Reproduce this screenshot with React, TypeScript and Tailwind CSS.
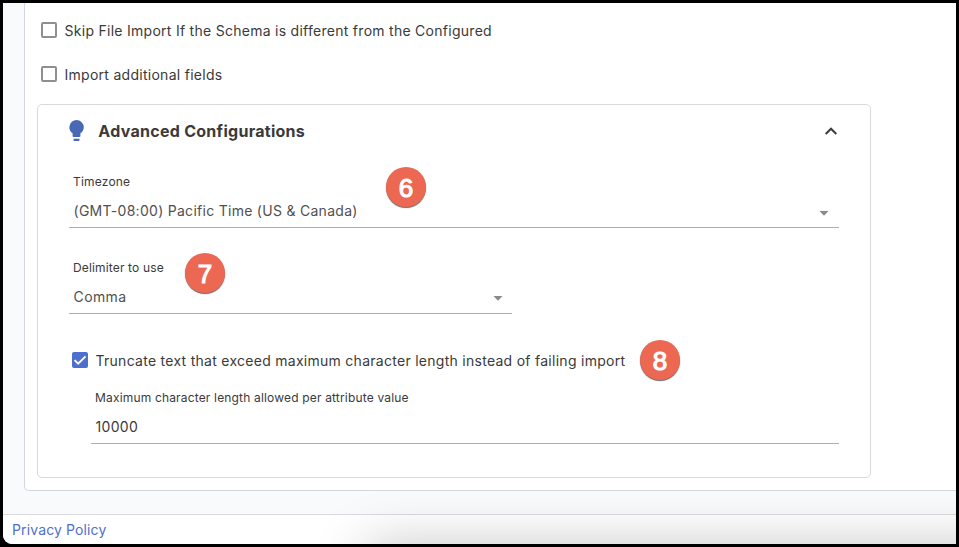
import type { ReactNode } from "react";

function Checkbox({ checked = false }: { checked?: boolean }) {
  if (checked) {
    return (
      <span className="flex size-4 shrink-0 items-center justify-center rounded-[2px] bg-[#4f6fcf]">
        <svg viewBox="0 0 16 16" className="size-4" fill="none">
          <path d="M2.6 8.2 6.2 11.7 13.5 4.4" stroke="#fff" strokeWidth="1.8" />
        </svg>
      </span>
    );
  }
  return <span className="size-4 shrink-0 rounded-[2px] border-2 border-[#8f8f8f] bg-white" />;
}

function Badge({ children, className }: { children: ReactNode; className: string }) {
  return (
    <span
      className={`absolute flex size-10 items-center justify-center rounded-full bg-[#ec6852] pt-[2px] font-['Liberation_Sans',Arial,sans-serif] text-[26px] leading-none text-white shadow-[0_1px_1px_rgba(0,0,0,0.6)] [-webkit-text-stroke:1.1px_white] ${className}`}
    >
      {children}
    </span>
  );
}

function Caret() {
  return (
    <svg viewBox="0 0 10 5" className="block h-[5px] w-[10px]">
      <path d="M0.5 0h9L5 4.8z" fill="#8a8a8a" />
    </svg>
  );
}

function Field({
  label,
  value,
  caretClass,
  className,
  labelClass,
  valueClass,
}: {
  label: string;
  value: string;
  caretClass?: string;
  className: string;
  labelClass: string;
  valueClass: string;
}) {
  return (
    <div className={`flex h-[56px] flex-col border-b border-[#afafaf] pl-1 ${className}`}>
      <div className={`h-5 text-[12px] leading-5 text-[#3a3a3a] ${labelClass}`}>{label}</div>
      <div className="mt-[9px] flex h-5 items-center justify-between pl-[0.5px]">
        <span className={`text-[14px] leading-5 ${valueClass}`}>{value}</span>
        {caretClass && <span className={caretClass}><Caret /></span>}
      </div>
    </div>
  );
}

export default function App() {
  return (
    <div className="h-[547px] w-[959px] overflow-hidden bg-black p-[3px] font-['Inter',sans-serif] text-[#3a3a3a]">
      <div className="relative flex h-[541px] flex-col overflow-hidden rounded-bl-[9px] bg-[#f8fafc] whitespace-nowrap">
        <main className="ml-[21px] h-[488px] shrink-0 rounded-bl-[5px] border-b border-l border-[#d3d6e0] bg-white pt-[5px] pl-3">
          <div className="flex h-11 items-center gap-[7.5px] pl-1">
            <Checkbox />
            <span className="text-[14px] tracking-[0.275px]">Skip File Import If the Schema is different from the Configured</span>
          </div>
          <div className="flex h-11 items-center gap-[7.5px] pl-1">
            <Checkbox />
            <span className="text-[14px] tracking-[0.275px]">Import additional fields</span>
          </div>

          <section className="relative mt-2 h-[374px] w-[834px] rounded-[5px] border border-[#d9d9d9]">
            <header className="flex h-[52px] items-center pr-[33.5px] pl-[31px]">
              <svg viewBox="0 0 15 21" className="-mt-px h-[21px] w-[15px]" fill="#4a69b4">
                <path d="M7.5 0a7.3 7.3 0 0 1 7.3 7.3c0 2.6-1.3 4.7-3.4 6V16a.9.9 0 0 1-.9.9h-6a.9.9 0 0 1-.9-.9v-2.7A7.3 7.3 0 0 1 7.5 0z" />
                <path d="M4.5 18.7h6V20a.9.9 0 0 1-.9.9H5.4a.9.9 0 0 1-.9-.9z" />
              </svg>
              <h2 className="ml-[14.3px] text-[16px] font-bold tracking-[0.28px]">Advanced Configurations</h2>
              <svg viewBox="0 0 12 8" className="-mt-px ml-auto h-2 w-3" fill="none">
                <path d="M0.7 7 6 1.7 11.3 7" stroke="#3c3c3c" strokeWidth="2" />
              </svg>
            </header>

            <Field
              label="Timezone"
              value="(GMT-08:00) Pacific Time (US & Canada)"
              caretClass="pt-1 pr-[10px]"
              className="mt-[15px] ml-[31px] w-[770px]"
              labelClass="tracking-[0.2px]"
              valueClass="tracking-[0.28px] text-[#505050]"
            />
            <Field
              label="Delimiter to use"
              value="Comma"
              caretClass="pt-[3px] pr-[9.5px]"
              className="mt-[30px] ml-[31px] w-[443px]"
              labelClass="tracking-[0.15px]"
              valueClass="tracking-[0.4px] text-[#505050]"
            />
            <div className="mt-[36px] ml-[34px] flex h-5 items-center gap-[7.5px]">
              <Checkbox checked />
              <span className="text-[14px] tracking-[0.275px]">
                Truncate text that exceed maximum character length instead of failing import
              </span>
            </div>
            <Field
              label="Maximum character length allowed per attribute value"
              value="10000"
              className="mt-[18px] ml-[53px] w-[748px]"
              labelClass="tracking-[0.17px]"
              valueClass="tracking-[0.3px]"
            />

            <Badge className="top-[62px] left-[348px]">6</Badge>
            <Badge className="top-[148px] left-[147px]">7</Badge>
            <Badge className="top-[235px] left-[602px]">8</Badge>
          </section>
        </main>

        <footer className="mt-[23px] flex h-[30px] shrink-0 items-center border-t border-[#d9d9de] bg-white pl-[9px]">
          <a className="text-[14px] tracking-[0.13px] text-[#4f6fcf]">Privacy Policy</a>
        </footer>
        <div className="absolute -bottom-[200px] left-[364px] h-[200px] w-[800px] shadow-[0_0_50px_rgba(0,0,0,0.22)]" />
      </div>
    </div>
  );
}
